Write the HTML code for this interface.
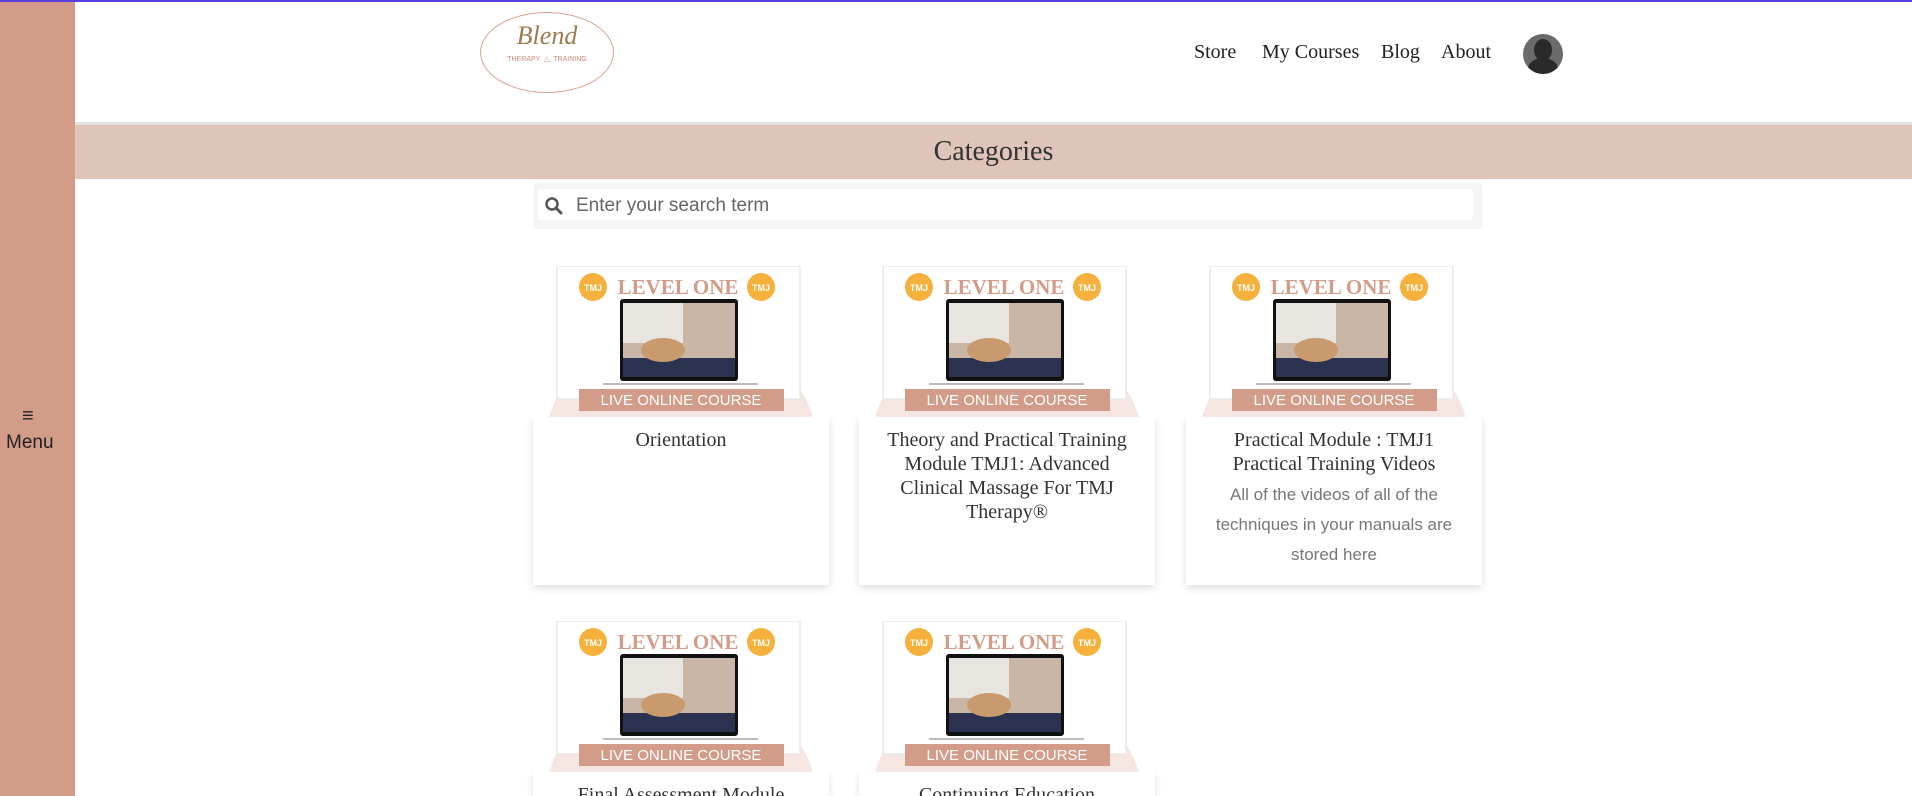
<!DOCTYPE html>
<html><head><meta charset="utf-8"><style>
*{box-sizing:border-box;margin:0;padding:0}
html,body{width:1912px;height:796px;overflow:hidden}
body{background:#fff;position:relative;font-family:"Liberation Sans",sans-serif}
.abs{position:absolute}
.side{left:0;top:0;width:75px;height:796px;background:#d39c89}
.top{left:0;top:0;width:1912px;height:2px;background:#5a3fe0}
.nav{top:41px;font-family:"Liberation Serif",serif;font-size:20px;color:#222}
.band{left:75px;top:122px;width:1837px;height:57px;background:#dfc4b9;border-top:3px solid #e2e2e2;text-align:center;font-family:"Liberation Serif",serif;font-size:28px;color:#333;line-height:54px}
.card{position:absolute;width:296px;background:#fff;box-shadow:0 3px 8px rgba(0,0,0,.13)}
.img{position:absolute;width:296px;height:151px;background:#fff;overflow:hidden}
.title{font-family:"Liberation Serif",serif;font-size:20px;color:#333;text-align:center;line-height:24px;padding:11px 18px 0}
.desc{font-family:"Liberation Sans",sans-serif;font-size:17px;color:#777;text-align:center;line-height:30px;padding:4px 28px}
</style></head><body>
<div class="abs side"></div>
<div class="abs top"></div>
<div class="abs" style="left:22px;top:405px;font-size:20px;color:#222">≡</div>
<div class="abs" style="left:6px;top:432px;font-size:19px;color:#222">Menu</div>
<div class="abs" style="left:480px;top:12px;width:134px;height:81px;border:1.5px solid #d9a08f;border-radius:50%;text-align:center">
<div style="font-family:'Liberation Serif',serif;font-style:italic;font-size:26px;color:#9e7a4f;margin-top:8px">Blend</div>
<div style="font-size:7px;color:#c98a78;margin-top:4px">THERAPY &nbsp;△&nbsp; TRAINING</div></div>
<div class="abs nav" style="left:1194px">Store</div>
<div class="abs nav" style="left:1262px">My Courses</div>
<div class="abs nav" style="left:1381px">Blog</div>
<div class="abs nav" style="left:1441px">About</div>
<div class="abs" style="left:1523px;top:34px;width:40px;height:40px;border-radius:50%;background:#6a6a6a;overflow:hidden"><div style="position:absolute;left:11px;top:5px;width:18px;height:22px;border-radius:50%;background:#2a2a2a"></div><div style="position:absolute;left:5px;top:24px;width:30px;height:22px;border-radius:50% 50% 0 0;background:#2a2a2a"></div></div>
<div class="abs band">Categories</div>
<div class="abs" style="left:533px;top:183px;width:950px;height:46px;background:#f5f5f5;border-radius:4px"></div>
<div class="abs" style="left:538px;top:189px;width:935px;height:31px;background:#fff;border-radius:3px"></div>
<svg class="abs" style="left:544px;top:196px" width="20" height="20" viewBox="0 0 20 20"><circle cx="8" cy="8" r="5.5" fill="none" stroke="#555" stroke-width="2.5"/><line x1="12" y1="12" x2="17" y2="17" stroke="#555" stroke-width="3" stroke-linecap="round"/></svg>
<div class="abs" style="left:576px;top:195px;font-size:19px;color:#666">Enter your search term</div>

<div class="card" style="left:533px;top:417px;height:168px"><div class="title">Orientation</div></div>
<div class="card" style="left:859px;top:417px;height:168px"><div class="title">Theory and Practical Training Module TMJ1: Advanced Clinical Massage For TMJ Therapy®</div></div>
<div class="card" style="left:1186px;top:417px;height:168px"><div class="title">Practical Module : TMJ1 Practical Training Videos</div><div class="desc">All of the videos of all of the techniques in your manuals are stored here</div></div>
<div class="card" style="left:533px;top:772px;height:24px;overflow:hidden"><div class="title" style="padding-top:11px">Final Assessment Module</div></div>
<div class="card" style="left:859px;top:772px;height:24px;overflow:hidden"><div class="title" style="padding-top:11px">Continuing Education</div></div>

<svg width="0" height="0" style="position:absolute"><defs>
<g id="im">
<rect x="0" y="0" width="296" height="151" fill="#fff"/>
<ellipse cx="148" cy="175" rx="135" ry="110" fill="#f6e6e1"/>
<rect x="24" y="0" width="243" height="133" fill="#fff" stroke="#e8e8e8" stroke-width="1.5"/>
<circle cx="60" cy="21" r="14" fill="#f5b13c"/><circle cx="228" cy="21" r="14" fill="#f5b13c"/>
<text x="60" y="25" font-size="9" font-weight="bold" fill="#fff" text-anchor="middle" font-family="Liberation Sans">TMJ</text>
<text x="228" y="25" font-size="9" font-weight="bold" fill="#fff" text-anchor="middle" font-family="Liberation Sans">TMJ</text>
<text x="145" y="28" font-size="21" font-weight="bold" fill="#d29c89" text-anchor="middle" font-family="Liberation Serif">LEVEL ONE</text>
<rect x="87" y="33" width="118" height="82" fill="#111" rx="3"/>
<rect x="90" y="37" width="112" height="74" fill="#c9b6a6"/>
<rect x="90" y="37" width="60" height="40" fill="#e8e4df"/>
<rect x="90" y="92" width="112" height="19" fill="#2c3350"/>
<ellipse cx="130" cy="84" rx="22" ry="12" fill="#c89a6e"/>
<rect x="70" y="117" width="155" height="2" fill="#bbb"/>
<rect x="46" y="123" width="205" height="22" fill="#d29c89"/>
<text x="148" y="139" font-size="15" fill="#fff" text-anchor="middle" font-family="Liberation Sans">LIVE ONLINE COURSE</text>
</g>
</defs></svg>
<svg class="img" style="left:533px;top:266px" viewBox="0 0 296 151"><use href="#im"/></svg>
<svg class="img" style="left:859px;top:266px" viewBox="0 0 296 151"><use href="#im"/></svg>
<svg class="img" style="left:1186px;top:266px" viewBox="0 0 296 151"><use href="#im"/></svg>
<svg class="img" style="left:533px;top:621px" viewBox="0 0 296 151"><use href="#im"/></svg>
<svg class="img" style="left:859px;top:621px" viewBox="0 0 296 151"><use href="#im"/></svg>
</body></html>
